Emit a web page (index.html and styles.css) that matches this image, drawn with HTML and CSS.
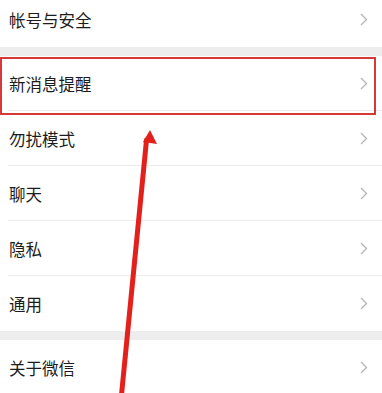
FILE: index.html
```html
<!DOCTYPE html>
<html lang="zh-CN">
<head>
    <meta charset="UTF-8">
    <meta name="viewport" content="width=device-width, initial-scale=1.0">
    <title>设置</title>
    <link rel="stylesheet" href="styles.css">
</head>
<body>
    <main class="settings">
        <div class="group first">
            <div class="row">
                <span class="label">帐号与安全</span>
                <svg class="chevron" width="8" height="13" viewBox="0 0 8 13"><path d="M1 1 L6.5 6.5 L1 12"/></svg>
            </div>
        </div>
        <div class="group">
            <div class="row highlighted">
                <span class="label">新消息提醒</span>
                <svg class="chevron" width="8" height="13" viewBox="0 0 8 13"><path d="M1 1 L6.5 6.5 L1 12"/></svg>
                <div class="highlight-box"></div>
            </div>
            <div class="row">
                <span class="label">勿扰模式</span>
                <svg class="chevron" width="8" height="13" viewBox="0 0 8 13"><path d="M1 1 L6.5 6.5 L1 12"/></svg>
            </div>
            <div class="row">
                <span class="label">聊天</span>
                <svg class="chevron" width="8" height="13" viewBox="0 0 8 13"><path d="M1 1 L6.5 6.5 L1 12"/></svg>
            </div>
            <div class="row">
                <span class="label">隐私</span>
                <svg class="chevron" width="8" height="13" viewBox="0 0 8 13"><path d="M1 1 L6.5 6.5 L1 12"/></svg>
            </div>
            <div class="row last">
                <span class="label">通用</span>
                <svg class="chevron" width="8" height="13" viewBox="0 0 8 13"><path d="M1 1 L6.5 6.5 L1 12"/></svg>
            </div>
        </div>
        <div class="group">
            <div class="row last">
                <span class="label">关于微信</span>
                <svg class="chevron" width="8" height="13" viewBox="0 0 8 13"><path d="M1 1 L6.5 6.5 L1 12"/></svg>
            </div>
        </div>
    </main>

    <!-- annotation arrow pointing at the highlighted row -->
    <svg class="arrow" width="382" height="393" viewBox="0 0 382 393">
        <line x1="146.5" y1="140" x2="121" y2="400" stroke="#e3201c" stroke-width="5" stroke-linecap="round"/>
        <polygon points="150,130 157,144 143,142" fill="#e3201c"/>
    </svg>
</body>
</html>
```

FILE: styles.css
```css
body {
    margin: 0;
    padding: 0;
    background-color: #ededed;
    font-family: "Noto Sans CJK SC", "Noto Sans", sans-serif;
    color: #1c1c1c;
    overflow: hidden;
}

.settings {
    display: flex;
    flex-direction: column;
    gap: 9px;
    margin-top: -8px;
}

.group {
    background-color: #fff;
}

.row {
    position: relative;
    height: 55px;
    box-sizing: border-box;
    margin-left: 8px;
    padding: 0 14px 0 1px;
    display: flex;
    align-items: center;
    justify-content: space-between;
    border-bottom: 1px solid #ececec;
}

.row.last {
    border-bottom: none;
}

.first .row {
    border-bottom: none;
}

.label {
    font-size: 16.5px;
    padding-top: 1px;
}

.chevron {
    fill: none;
    stroke: #b5b5b5;
    stroke-width: 1.3;
}

.highlight-box {
    position: absolute;
    left: -8px;
    top: 1px;
    width: 376px;
    height: 58px;
    box-sizing: border-box;
    border: 2px solid #d8383c;
    pointer-events: none;
}

.arrow {
    position: absolute;
    left: 0;
    top: 0;
    pointer-events: none;
}
```
